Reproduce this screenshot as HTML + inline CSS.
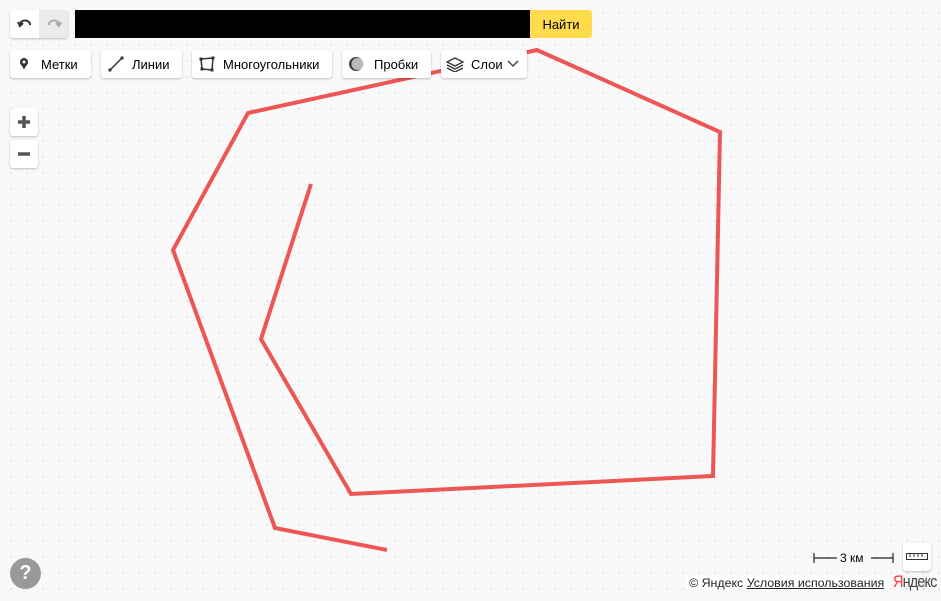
<!DOCTYPE html>
<html><head><meta charset="utf-8"><style>
body{margin:0;width:941px;height:601px;overflow:hidden;position:relative;font-family:"Liberation Sans",sans-serif;font-size:13px;color:#000;
background-color:#f9f9f9;background-image:radial-gradient(circle,#e2e2e2 1px,transparent 1.2px);background-size:16px 16px;background-position:3px 5px}
.b{position:absolute;background:#fff;border-radius:3px;box-shadow:0 1px 2px rgba(0,0,0,.25);height:28px;display:flex;align-items:center;box-sizing:border-box}
svg.l{position:absolute;left:0;top:0}
</style></head><body>
<svg class="l" width="941" height="601"><polyline points="311,184 261,339 351,494 713,476 720,132 537,50 248,113 173,250 275,528 387,550" fill="none" stroke="#ee5555" stroke-width="4" stroke-linejoin="miter"/></svg>
<div class="b" style="left:10px;top:10px;width:58px;padding:0">
 <div style="width:29px;height:28px;display:flex;align-items:center;justify-content:center"><svg width="16" height="12"><path d="M3 6 A5 4 0 0 1 13 7 M1 4 L3 8 L6 5" fill="none" stroke="#333" stroke-width="2"/></svg></div>
 <div style="width:29px;height:28px;background:#ebebeb;border-radius:0 3px 3px 0;display:flex;align-items:center;justify-content:center"><svg width="16" height="12"><path d="M13 6 A5 4 0 0 0 3 7 M15 4 L13 8 L10 5" fill="none" stroke="#aaa" stroke-width="2"/></svg></div>
</div>
<div style="position:absolute;left:75px;top:10px;width:455px;height:28px;background:#000"></div>
<div style="position:absolute;left:530px;top:10px;width:62px;height:28px;background:#ffdb4d;border-radius:0 3px 3px 0;display:flex;align-items:center;justify-content:center">Найти</div>
<div class="b" style="left:10px;top:50px;width:81px;padding-left:9px"><svg width="10" height="14"><path d="M5 1a4 4 0 0 1 4 4c0 3-3 4-4 8c-1-4-4-5-4-8a4 4 0 0 1 4-4z" fill="#333"/><circle cx="5" cy="5" r="1.5" fill="#fff"/></svg><span style="margin-left:12px">Метки</span></div>
<div class="b" style="left:101px;top:50px;width:81px;padding-left:7px"><svg width="16" height="16"><path d="M2 14L14 2" stroke="#333" stroke-width="1.5"/><circle cx="2" cy="14" r="1.6" fill="#333"/><circle cx="14" cy="2" r="1.6" fill="#333"/></svg><span style="margin-left:8px">Линии</span></div>
<div class="b" style="left:192px;top:50px;width:140px;padding-left:7px"><svg width="16" height="16"><path d="M2 3L14 2L13 14L3 13Z" fill="none" stroke="#333" stroke-width="1.5"/><rect x="0.5" y="1.5" width="3" height="3" fill="#333"/><rect x="12.5" y="0.5" width="3" height="3" fill="#333"/><rect x="11.5" y="12.5" width="3" height="3" fill="#333"/><rect x="1.5" y="11.5" width="3" height="3" fill="#333"/></svg><span style="margin-left:8px">Многоугольники</span></div>
<div class="b" style="left:342px;top:50px;width:89px;padding-left:6px"><svg width="16" height="16"><circle cx="8" cy="8" r="7" fill="#444"/><circle cx="9.5" cy="8" r="6" fill="#bbb"/></svg><span style="margin-left:10px">Пробки</span></div>
<div class="b" style="left:441px;top:50px;width:86px;padding-left:5px"><svg width="18" height="16"><path d="M9 2L17 6L9 10L1 6Z M1 9L9 13L17 9 M1 12L9 16L17 12" fill="none" stroke="#333" stroke-width="1.3"/></svg><span style="margin-left:7px">Слои</span><svg width="12" height="8" style="margin-left:4px"><path d="M1 1L6 6L11 1" fill="none" stroke="#333" stroke-width="1.3"/></svg></div>
<div class="b" style="left:10px;top:108px;width:28px;justify-content:center"><svg width="14" height="14"><path d="M7 1V13M1 7H13" stroke="#555" stroke-width="3.5"/></svg></div>
<div class="b" style="left:10px;top:140px;width:28px;justify-content:center"><svg width="14" height="14"><path d="M1 7H13" stroke="#555" stroke-width="3.5"/></svg></div>
<div style="position:absolute;left:10px;top:558px;width:31px;height:31px;border-radius:50%;background:#999;color:#fff;font-size:20px;font-weight:bold;text-align:center;line-height:31px">?</div>
<svg style="position:absolute;left:813px;top:552px" width="82" height="12"><path d="M1 1V11M1 6H24M58 6H80M80 1V11" stroke="#222" stroke-width="1.2"/></svg>
<div style="position:absolute;left:837px;top:551px;font-size:12px;background:#f9f9f9;padding:0 3px">3 км</div>
<div class="b" style="left:903px;top:543px;width:28px;height:28px;justify-content:center"><svg width="22" height="8"><rect x="0.5" y="0.5" width="21" height="6" fill="none" stroke="#333"/><path d="M4 1V4M8 1V4M12 1V4M16 1V4" stroke="#333"/></svg></div>
<div style="position:absolute;left:686px;top:576px;font-size:12.4px;background:#fff;padding:0 3px;color:#222">© Яндекс <span style="text-decoration:underline">Условия использования</span></div>
<div style="position:absolute;left:893px;top:572px;font-size:17px;letter-spacing:-1px;color:#444;transform:scaleX(.85);transform-origin:left"><span style="color:#f33">Я</span>ндекс</div>
</body></html>
